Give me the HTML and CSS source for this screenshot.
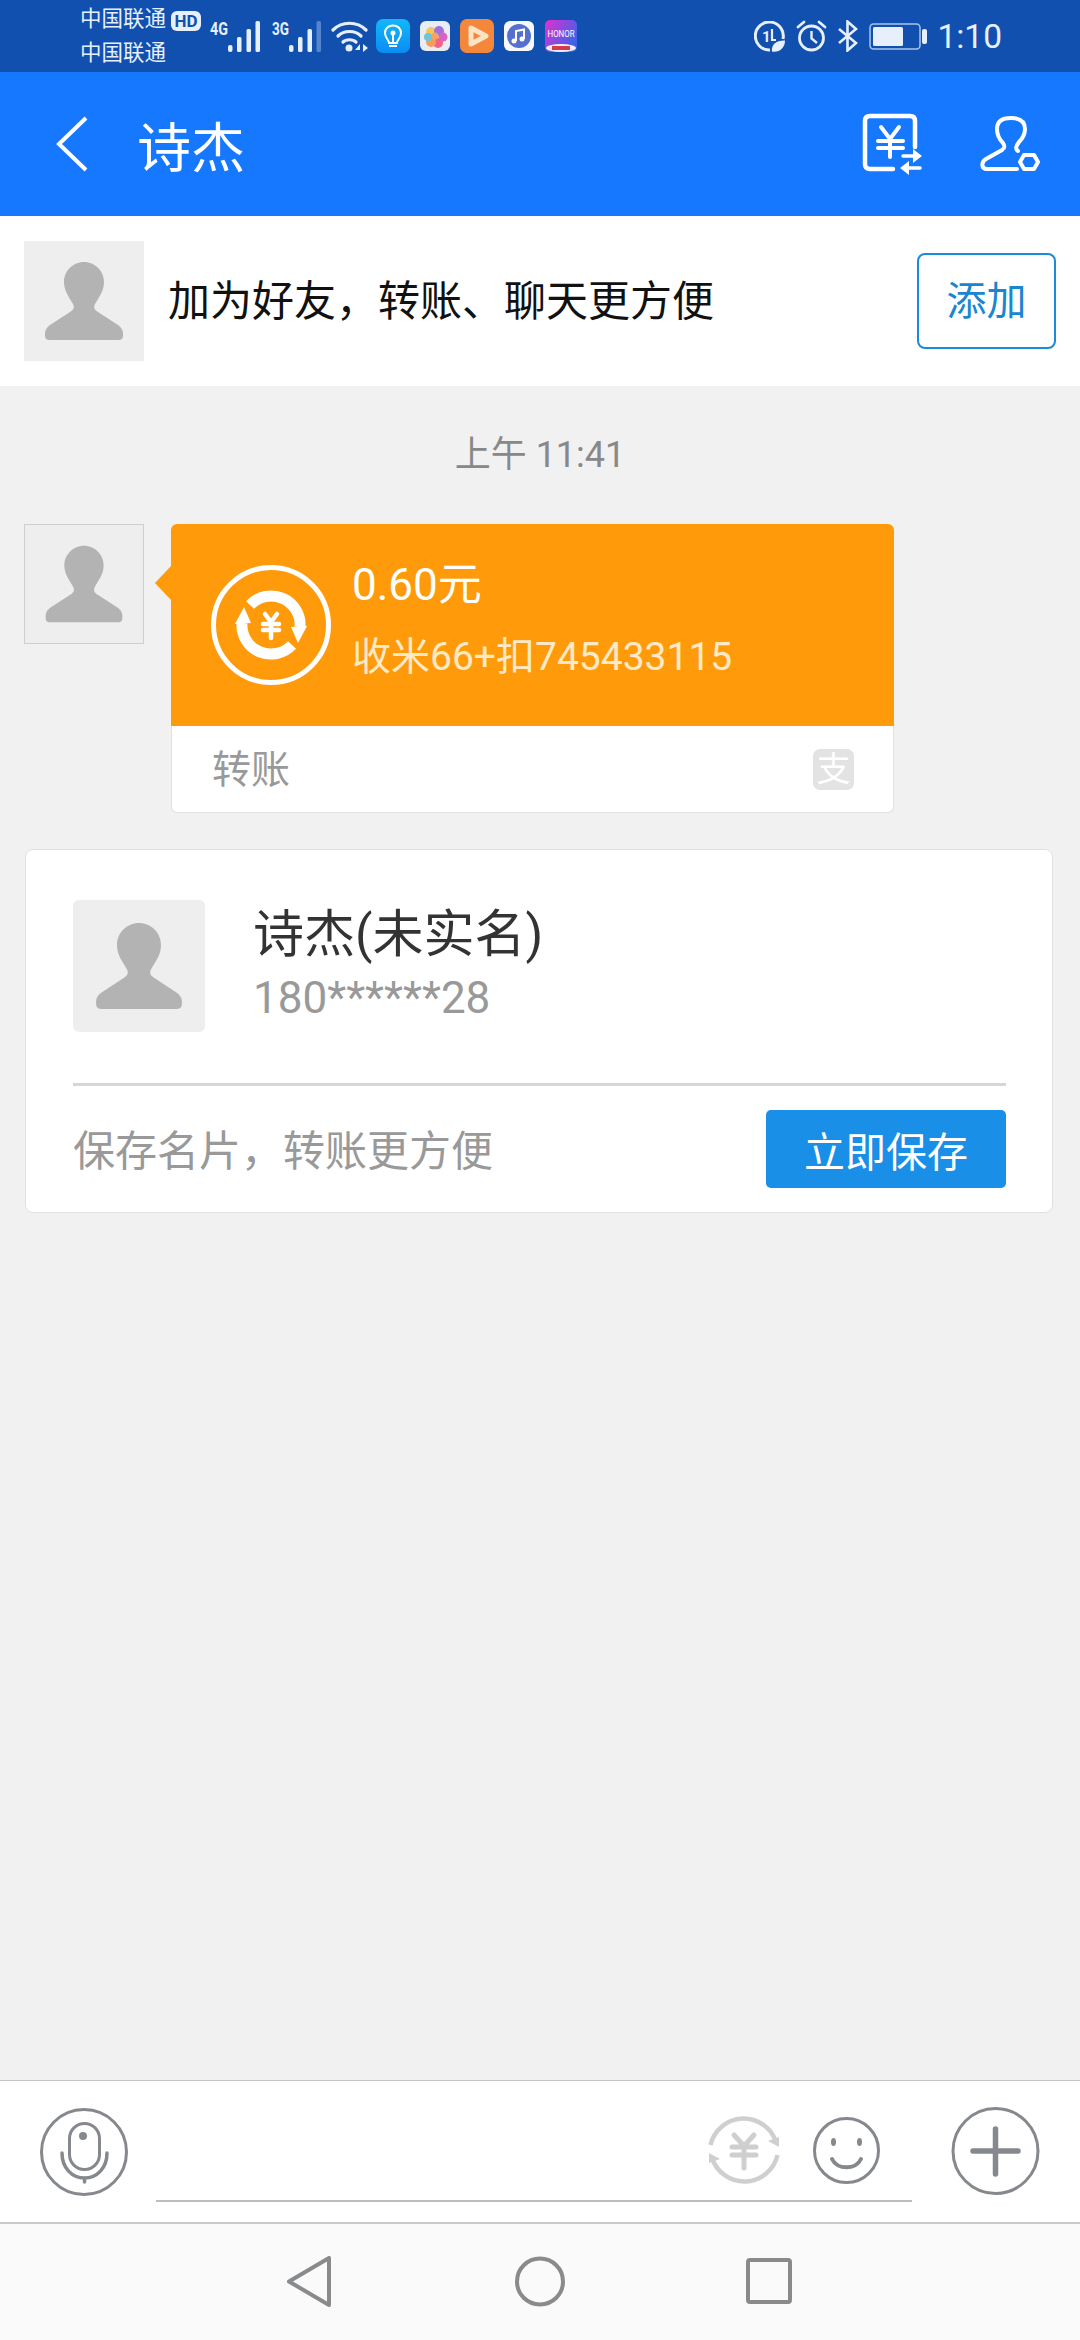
FILE: index.html
```html
<!DOCTYPE html>
<html lang="zh-CN">
<head>
    <meta charset="UTF-8">
    <meta name="viewport" content="width=device-width, initial-scale=1.0">
    <title>诗杰</title>
    <link rel="stylesheet" href="styles.css">
</head>
<body>
    <svg class="defs" width="0" height="0">
        <defs>
            <symbol id="person" viewBox="0 0 120 120">
                <path d="M60 21C49 21 40 30 40 41C40 50 45 56 49 63C51 67 49 69 46 71L26 84C23 86 21 89 21 92V95C21 97.5 23 99 25 99H95C97 99 99 97.5 99 95V92C99 89 97 86 94 84L74 71C71 69 69 67 71 63C75 56 80 50 80 41C80 30 71 21 60 21Z" fill="#b3b3b3"/>
            </symbol>
            <symbol id="bars" viewBox="0 0 32 32">
                <rect x="0" y="25" width="4.500" height="7" rx="2"/>
                <rect x="9" y="17" width="4.500" height="15" rx="1.500"/>
                <rect x="18.500" y="9" width="4.500" height="23" rx="1.500"/>
            </symbol>
        </defs>
    </svg>

    <div class="page">
        <!-- status bar -->
        <div class="status-bar">
            <div class="carrier">
                <div>中国联通</div>
                <div>中国联通</div>
            </div>
            <span class="hd-badge">HD</span>
            <svg class="signal" width="50" height="44" viewBox="0 0 50 44">
                <text x="0" y="23" class="net-type" textLength="18" lengthAdjust="spacingAndGlyphs">4G</text>
                <g fill="#e6effb">
                    <svg x="18" y="8" width="32" height="32"><use href="#bars"/></svg>
                    <rect x="45.500" y="9" width="4.500" height="31" rx="1.500"/>
                </g>
            </svg>
            <svg class="signal signal-second" width="50" height="44" viewBox="0 0 50 44">
                <text x="0" y="23" class="net-type" textLength="17" lengthAdjust="spacingAndGlyphs">3G</text>
                <g fill="#e6effb">
                    <svg x="17" y="8" width="32" height="32"><use href="#bars"/></svg>
                </g>
                <rect x="44.500" y="9" width="4.500" height="31" rx="1.500" fill="#5584cc"/>
            </svg>
            <svg class="wifi" width="37" height="32" viewBox="0 0 37 32" fill="none" stroke="#e6effb" stroke-width="3.200" stroke-linecap="round">
                <path d="M2 9C11 0 26 0 35 9"/>
                <path d="M7 15C13 9 24 9 30 15"/>
                <path d="M12 21C15 18 22 18 25 21"/>
                <circle cx="18" cy="27" r="3.500" fill="#e6effb" stroke="none"/>
                <path d="M29 23L24 29H29ZM32 23V31L37 27Z" fill="#e6effb" stroke="none"/>
            </svg>
            <svg class="app app-bulb" width="34" height="34" viewBox="0 0 34 34">
                <defs>
                    <linearGradient id="bulbBg" x1="0" y1="0" x2="0" y2="1">
                        <stop offset="0" stop-color="#13b8f8"/>
                        <stop offset="1" stop-color="#0a8cf5"/>
                    </linearGradient>
                </defs>
                <rect width="34" height="34" rx="7" fill="url(#bulbBg)"/>
                <path d="M13 24C13 21 9 19 9 14C9 9.500 12.500 6.500 17 6.500C21.500 6.500 25 9.500 25 14C25 19 21 21 21 24Z" fill="none" stroke="#fff" stroke-width="2"/>
                <path d="M13 27H21M17 14V23" stroke="#fff" stroke-width="2"/>
                <circle cx="17" cy="14" r="2.500" fill="#fff"/>
            </svg>
            <svg class="app app-gallery" width="30" height="30" viewBox="0 0 30 30">
                <rect width="30" height="30" rx="6" fill="#e9edf3"/>
                <circle cx="11" cy="11" r="5" fill="#f6c55c"/>
                <circle cx="19" cy="10" r="5" fill="#a36fe0"/>
                <circle cx="23" cy="16" r="4.500" fill="#d565c0"/>
                <circle cx="18" cy="22" r="5" fill="#f0648a"/>
                <circle cx="11" cy="21" r="5" fill="#f79a5c"/>
                <circle cx="8" cy="16" r="4" fill="#6cc5d9"/>
                <circle cx="15" cy="15" r="3.500" fill="#f2a55e"/>
            </svg>
            <svg class="app app-video" width="34" height="34" viewBox="0 0 34 34">
                <rect width="34" height="34" rx="7" fill="#f5873a"/>
                <path d="M11 9V25L26 17Z" fill="none" stroke="#fde3c5" stroke-width="5" stroke-linejoin="round"/>
            </svg>
            <svg class="app app-music" width="30" height="30" viewBox="0 0 30 30">
                <rect width="30" height="30" rx="6" fill="#f7f8fc"/>
                <circle cx="15" cy="15" r="12" fill="#5570cf"/>
                <path d="M12 20V10L20 8.500V18" fill="none" stroke="#fff" stroke-width="2"/>
                <circle cx="10" cy="20" r="2.500" fill="#fff"/>
                <circle cx="18" cy="18" r="2.500" fill="#fff"/>
            </svg>
            <svg class="app app-honor" width="32" height="32" viewBox="0 0 32 32">
                <defs>
                    <linearGradient id="honorBg" x1="0" y1="0" x2="1" y2="0.600">
                        <stop offset="0" stop-color="#e22fd0"/>
                        <stop offset="1" stop-color="#3b63ea"/>
                    </linearGradient>
                </defs>
                <rect width="32" height="32" rx="5" fill="url(#honorBg)"/>
                <text x="16" y="17" class="honor-label" text-anchor="middle" textLength="27" lengthAdjust="spacingAndGlyphs">HONOR</text>
                <ellipse cx="16" cy="28" rx="15" ry="4" fill="#fbeef0"/>
                <rect x="7" y="26" width="18" height="4" fill="#d43a4d"/>
            </svg>
            <div class="status-right">
                <svg width="31" height="31" viewBox="0 0 31 31" fill="none" stroke="#e6effb" stroke-width="3">
                    <path d="M29 18A14 14 0 1 0 16 29"/>
                    <text x="8" y="21" class="data-label">1</text>
                    <path d="M18 8V19H22" stroke-width="2.200"/>
                    <path d="M18 30.500C17 24 22 19 31 19.500C31 27 25 32 18 30.500Z" fill="#e6effb" stroke="none"/>
                </svg>
                <svg width="31" height="32" viewBox="0 0 31 32" fill="none" stroke="#e6effb" stroke-width="2.800">
                    <circle cx="15.500" cy="18" r="12"/>
                    <path d="M15.500 11V18.500L21 23" stroke-width="2.400"/>
                    <path d="M2 7L8 2M29 7L23 2" stroke-linecap="round"/>
                </svg>
                <svg width="20" height="32" viewBox="0 0 20 32" fill="none" stroke="#e6effb" stroke-width="2.600">
                    <path d="M1 9L18 23L9.500 30.500V1.500L18 9L1 23"/>
                </svg>
                <svg width="58" height="27" viewBox="0 0 58 27">
                    <rect x="1" y="1" width="50" height="25" rx="3.500" fill="none" stroke="#a9c3ea" stroke-width="1.500"/>
                    <rect x="4" y="4" width="30" height="19" rx="1.500" fill="#e6effb"/>
                    <rect x="53" y="6" width="5" height="15" rx="2" fill="#e6effb"/>
                </svg>
                <span class="clock">1:10</span>
            </div>
        </div>

        <!-- title bar -->
        <div class="title-bar">
            <svg class="back-icon" width="34" height="56" viewBox="0 0 34 56" fill="none" stroke="#fff" stroke-width="4">
                <path d="M31 2L4 28L31 54"/>
            </svg>
            <span class="title">诗杰</span>
            <div class="title-actions">
                <svg width="62" height="64" viewBox="0 0 62 64" fill="none" stroke="#fff" stroke-width="4.500" stroke-linecap="round">
                    <path d="M31 57H8Q3 57 3 52V9Q3 4 8 4H48Q53 4 53 9V35"/>
                    <path d="M19 15L28 27L37 15M16 29H41M16 36H41M28 27V45" stroke-width="4"/>
                    <path d="M41 44H56M42 56H58" stroke-width="3.500"/>
                    <path d="M51 37L60 44L51 51ZM47 49L38 56L47 63Z" fill="#fff" stroke="none"/>
                </svg>
                <svg width="62" height="62" viewBox="0 0 62 62" fill="none" stroke="#fff" stroke-width="4" stroke-linecap="round">
                    <path d="M40 38C37 36 38 33 41 29C45 25 47 20 47 16C47 8 41 5 33 5C25 5 19 8 19 16C19 22 22 27 25 30C27 33 27 35 24 37L8 46C3 49 3 56 9 56H39"/>
                    <path d="M46 42H56L60 49L56 56H46L42 49Z" stroke-linejoin="round"/>
                </svg>
            </div>
        </div>

        <!-- add friend -->
        <div class="add-bar">
            <div class="avatar">
                <svg width="120" height="120"><use href="#person"/></svg>
            </div>
            <span class="add-text">加为好友，转账、聊天更方便</span>
            <button type="button" class="add-btn">添加</button>
        </div>

        <!-- messages -->
        <div class="chat">
            <div class="chat-time">上午 11:41</div>
            <div class="msg">
                <div class="avatar avatar-line">
                    <svg width="118" height="118"><use href="#person"/></svg>
                </div>
                <div class="transfer">
                    <div class="transfer-top">
                        <svg class="transfer-icon" width="120" height="120" viewBox="0 0 120 120" fill="none" stroke="#fff">
                            <circle cx="60" cy="60" r="57.500" stroke-width="5"/>
                            <g id="orangeArc">
                                <path d="M39 40A29 29 0 0 1 89 62" stroke-width="11"/>
                                <path d="M80 62L96 61L87 78Z" fill="#fff" stroke="none"/>
                            </g>
                            <use href="#orangeArc" transform="rotate(180 60 60)"/>
                            <path d="M54 49L60 57L66 49M52 59H68M52 65H68M60 57V73" stroke-width="4.500" stroke-linecap="round"/>
                        </svg>
                        <div class="transfer-info">
                            <div class="amount">0.60元</div>
                            <div class="memo">收米66+扣745433115</div>
                        </div>
                    </div>
                    <div class="transfer-foot">
                        <span class="foot-label">转账</span>
                        <span class="pay-logo">支</span>
                    </div>
                </div>
            </div>

            <div class="card">
                <div class="card-top">
                    <div class="avatar avatar-big">
                        <svg width="132" height="132"><use href="#person"/></svg>
                    </div>
                    <div class="card-info">
                        <div class="card-name">诗杰(未实名)</div>
                        <div class="card-phone">180******28</div>
                    </div>
                </div>
                <div class="card-foot">
                    <span class="card-hint">保存名片，转账更方便</span>
                    <button type="button" class="save-btn">立即保存</button>
                </div>
            </div>
        </div>

        <!-- input -->
        <div class="input-bar">
            <svg class="input-mic" width="88" height="88" viewBox="0 0 88 88" fill="none" stroke="#85888c" stroke-width="3">
                <circle cx="44" cy="44" r="42.500"/>
                <rect x="29.500" y="15.500" width="30" height="46" rx="15"/>
                <circle cx="43" cy="28" r="4" fill="#85888c" stroke="none"/>
                <path d="M22 45C22 60 32 70 44.500 70C57 70 67 60 67 45M44.500 70V74" stroke-linecap="round" stroke-width="3.500"/>
            </svg>
            <div class="input-box">
                <svg width="72" height="72" viewBox="0 0 72 72" fill="none" stroke="#cfcfcf" stroke-width="4.500">
                    <g id="grayArc">
                        <path d="M2.500 31A34 34 0 0 1 68 28"/>
                        <path d="M60 27L71 33L71 23Z" fill="#cfcfcf" stroke="none"/>
                    </g>
                    <use href="#grayArc" transform="rotate(180 36 36)"/>
                    <path d="M26 21L36 32L46 21M24 33H48M24 41H48M36 32V54" stroke-linecap="round" stroke-width="5"/>
                </svg>
                <svg width="67" height="67" viewBox="0 0 67 67" fill="none" stroke="#85888c" stroke-width="3">
                    <circle cx="33.500" cy="33.500" r="32"/>
                    <ellipse cx="20.500" cy="25" rx="2.500" ry="4" fill="#85888c" stroke="none"/>
                    <ellipse cx="46.500" cy="25" rx="2.500" ry="4" fill="#85888c" stroke="none"/>
                    <path d="M19 42C24 53 43 53 48 42" stroke-width="4" stroke-linecap="round"/>
                </svg>
            </div>
            <svg class="input-plus" width="89" height="88" viewBox="0 0 89 88" fill="none" stroke="#85888c" stroke-width="3">
                <circle cx="44.500" cy="44" r="42.500"/>
                <path d="M22 44H67M44.500 22V67" stroke-width="5.500" stroke-linecap="round"/>
            </svg>
        </div>

        <!-- system nav -->
        <div class="nav-bar">
            <svg width="44" height="51" viewBox="0 0 44 51" fill="none" stroke="#888a8c" stroke-width="4" stroke-linejoin="round">
                <path d="M2 25.500L42 2V49Z"/>
            </svg>
            <svg class="nav-home" width="50" height="51" viewBox="0 0 50 51" fill="none" stroke="#888a8c" stroke-width="4">
                <circle cx="25" cy="25.500" r="23"/>
            </svg>
            <svg class="nav-recent" width="46" height="46" viewBox="0 0 46 46" fill="none" stroke="#888a8c" stroke-width="4" stroke-linejoin="round">
                <rect x="2" y="2" width="42" height="42" rx="2"/>
            </svg>
        </div>
    </div>
</body>
</html>
```

FILE: styles.css
```css
* {
    box-sizing: border-box;
}

body {
    margin: 0;
    padding: 0;
    font-family: Roboto, "Noto Sans CJK SC", sans-serif;
    background-color: #f1f1f2;
}

button {
    font-family: inherit;
    padding: 0;
    cursor: pointer;
}

svg {
    display: block;
    flex-shrink: 0;
}

.defs {
    position: absolute;
}

.page {
    display: flex;
    flex-direction: column;
    width: 1080px;
    height: 2340px;
    overflow: hidden;
}

/* status bar */
.status-bar {
    display: flex;
    align-items: center;
    flex-shrink: 0;
    height: 72px;
    padding: 0 78px 0 80px;
    background-color: #1150ae;
    color: #e6effb;
}

.carrier {
    font-size: 21.500px;
    line-height: 34px;
    width: 87px;
}

.hd-badge {
    align-self: flex-start;
    width: 30px;
    height: 20px;
    margin: 11px 0 0 4px;
    border-radius: 6px;
    background-color: #e6effb;
    color: #1150ae;
    font-size: 17px;
    font-weight: 700;
    line-height: 20px;
    text-align: center;
}

.signal {
    align-self: flex-start;
    margin: 12px 0 0 9px;
}

.signal-second {
    margin-left: 12px;
}

.net-type {
    font-size: 18px;
    font-weight: 700;
    fill: #e6effb;
}

.wifi {
    margin-left: 9px;
    margin-top: 2px;
}

.app {
    margin-left: 10px;
}

.app-bulb {
    margin-left: 8px;
}

.app-honor {
    margin-left: 11px;
}

.honor-label {
    font-size: 8.500px;
    fill: #fff;
}

.data-label {
    font-size: 15px;
    font-weight: 700;
    fill: #e6effb;
    stroke: none;
}

.status-right {
    display: flex;
    align-items: center;
    gap: 11px;
    margin-left: auto;
}

.clock {
    margin-left: -1px;
    font-size: 33.500px;
}

/* title bar */
.title-bar {
    display: flex;
    align-items: center;
    flex-shrink: 0;
    height: 144px;
    padding: 0 40px 0 55px;
    background-color: #1677ff;
    color: #fff;
}

.title {
    margin-left: 48px;
    font-size: 54px;
}

.title-actions {
    display: flex;
    align-items: center;
    gap: 54px;
    margin-left: auto;
}

/* add friend */
.add-bar {
    display: flex;
    align-items: center;
    flex-shrink: 0;
    height: 170px;
    padding: 0 24px;
    background-color: #fff;
}

.avatar {
    flex-shrink: 0;
    width: 120px;
    height: 120px;
    background-color: #eee;
}

.avatar-line {
    border: 1px solid #cfcfcf;
}

.avatar-big {
    width: 132px;
    height: 132px;
    border-radius: 6px;
}

.add-text {
    margin-left: 24px;
    padding-bottom: 8px;
    font-size: 42px;
    color: #111;
}

.add-btn {
    width: 139px;
    height: 96px;
    margin-left: auto;
    padding-bottom: 6px;
    border: 2px solid #1a8bd8;
    border-radius: 8px;
    background-color: #fff;
    color: #1a86d0;
    font-size: 40px;
}

/* messages */
.chat {
    flex: 1;
    padding-top: 45px;
}

.chat-time {
    margin-bottom: 45px;
    font-size: 36px;
    line-height: 48px;
    text-align: center;
    color: #888;
}

.msg {
    display: flex;
    align-items: flex-start;
    gap: 27px;
    padding-left: 24px;
}

.transfer {
    position: relative;
    width: 723px;
}

.transfer::before {
    content: "";
    position: absolute;
    left: -16px;
    top: 42px;
    border-style: solid;
    border-width: 17px 16px 17px 0;
    border-color: transparent #ff9b0b transparent transparent;
}

.transfer-top {
    display: flex;
    height: 202px;
    padding: 41px 0 0 40px;
    border-radius: 6px 6px 0 0;
    background-color: #ff9b0b;
}

.transfer-info {
    margin: -10px 0 0 21px;
}

.amount {
    font-size: 44px;
    line-height: 60px;
    color: #fff;
}

.memo {
    margin-top: 12px;
    font-size: 39px;
    line-height: 60px;
    color: #ffe9c6;
}

.transfer-foot {
    display: flex;
    align-items: center;
    justify-content: space-between;
    height: 87px;
    padding: 0 39px 0 40px;
    border: 1px solid #e0e0e0;
    border-top: none;
    border-radius: 0 0 6px 6px;
    background-color: #fff;
    font-size: 39px;
    color: #999;
}

.foot-label {
    padding-bottom: 6px;
}

.pay-logo {
    width: 41px;
    height: 41px;
    border-radius: 7px;
    background-color: #e3e3e3;
    color: #fff;
    font-size: 34px;
    line-height: 40px;
    text-align: center;
}

.card {
    width: 1028px;
    height: 364px;
    margin: 36px 0 0 25px;
    padding: 50px 46px 0 47px;
    border: 1px solid #e0e0e0;
    border-radius: 8px;
    background-color: #fff;
}

.card-top {
    display: flex;
    align-items: flex-start;
    gap: 48px;
    height: 186px;
    border-bottom: 3px solid #d6d6d6;
}

.card-info {
    padding-top: 5px;
}

.card-name {
    font-size: 51px;
    line-height: 60px;
    color: #333;
}

.card-phone {
    margin-top: 3px;
    font-size: 44px;
    line-height: 60px;
    color: #999;
}

.card-foot {
    display: flex;
    align-items: center;
    justify-content: space-between;
    margin-top: 24px;
}

.card-hint {
    padding-bottom: 4px;
    font-size: 42px;
    color: #999;
}

.save-btn {
    width: 240px;
    height: 78px;
    border: none;
    border-radius: 5px;
    background-color: #1a8fe8;
    color: #fff;
    font-size: 41px;
}

/* input */
.input-bar {
    display: flex;
    align-items: flex-start;
    flex-shrink: 0;
    height: 144px;
    padding: 27px 0 0 40px;
    border-top: 1px solid #c4c4c4;
    border-bottom: 2px solid #c9c9c9;
    background-color: #fff;
}

.input-box {
    display: flex;
    align-items: center;
    justify-content: flex-end;
    gap: 33px;
    width: 756px;
    height: 94px;
    margin-left: 28px;
    padding: 8px 32px 16px 0;
    border-bottom: 2px solid #bdbdbd;
}

.input-plus {
    margin: -1px 0 0 39px;
}

/* system nav */
.nav-bar {
    display: flex;
    align-items: center;
    flex: 0 0 116px;
    padding: 0 0 2px 287px;
    background-color: #fafafa;
}

.nav-home {
    margin-left: 184px;
}

.nav-recent {
    margin-left: 181px;
}
```
